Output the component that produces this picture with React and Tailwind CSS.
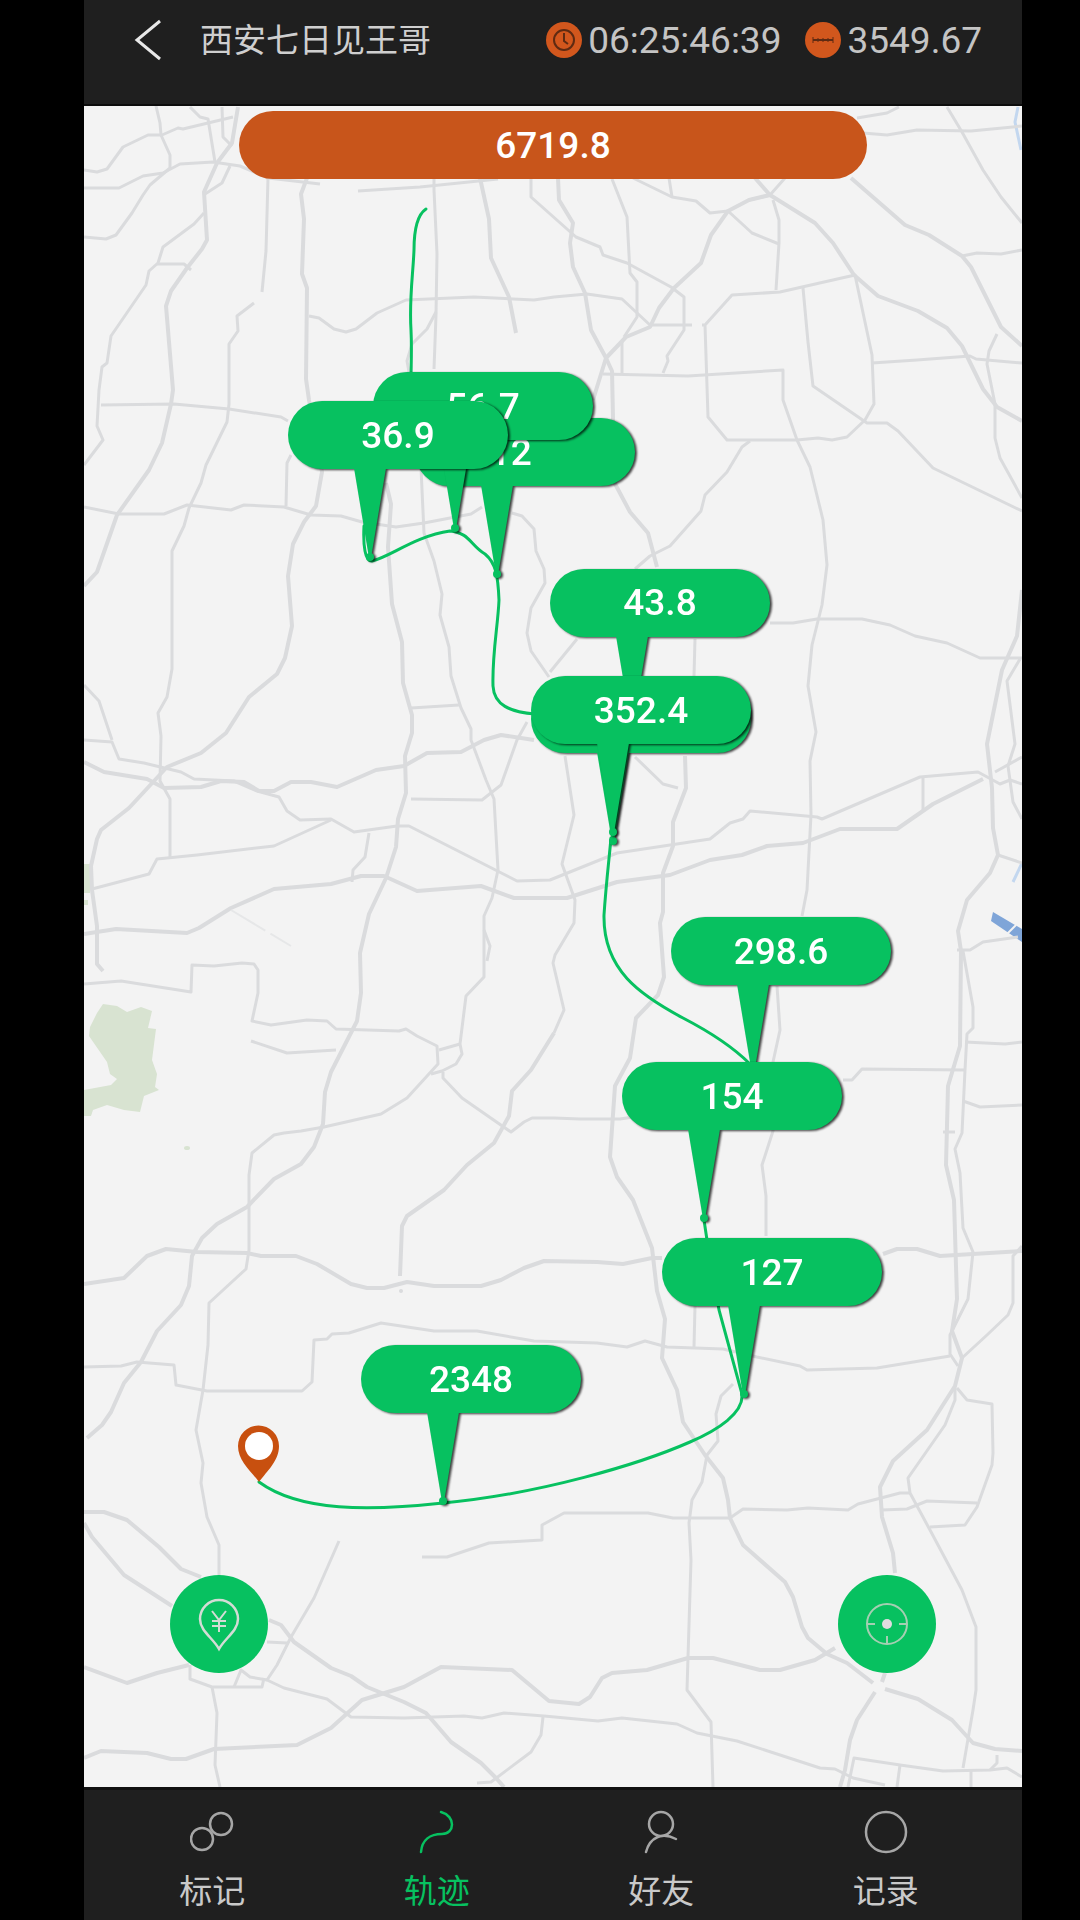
import { clsx } from 'clsx'

// ── Map data ──────────────────────────────────────────────────
const VIEW = { x: 84, y: 106, w: 938, h: 1681 }

const roads = [
  // top left
  '84,170 97,172 107,169 123,147 148,135 162,135 178,128 183,129 233,117',
  '156,106 160,123 161,135 170,155 170,168 150,185 143,195 132,213 116,235 106,239 84,237',
  '84,188 119,188 143,176 163,173 180,164 213,162 240,166 268,178 320,184',
  '190,107 200,117 208,119 215,162',
  '222,107 223,137 232,146',
  '230,166 222,183 205,194',
  '204,213 194,224 163,247 158,263 149,271 146,285 111,336 107,363 102,367 99,390 97,426 103,440 84,465',
  '157,264 184,264 191,270',
  '268,178 266,251 262,292',
  '254,303 237,316 238,331 229,344 229,404 227,422 206,465 201,483 189,508 184,526 172,551 172,669 167,697 158,713 161,736 160,781 170,799 170,857',
  '101,405 174,404 229,409 281,417 288,421',
  '291,455 287,463 286,506',
  '84,507 119,514 164,514 187,505 231,510 244,505 284,507 311,515 341,516 362,522 396,527 424,523 471,514 482,507',
  '309,316 319,318 334,329 346,332 356,329 377,313 406,300 474,297 534,300 554,297 587,294 622,299 650,325 692,325',
  '434,178 434,190 437,254 436,315 434,369',
  '436,312 427,329 412,344 407,361 409,372',
  '358,191 420,187 498,179',
  // top centre
  '531,178 531,197 576,237 600,247 603,255 627,263 671,287 684,297 684,330 667,356 668,361 663,373',
  '612,179 627,217 630,273 637,282 637,317 624,337',
  '633,178 672,197 696,201 710,213 728,211',
  '669,178 672,197',
  '785,178 770,195 749,200',
  '773,200 779,220 779,243 776,290',
  '728,211 752,233 779,244',
  '603,374 688,376 783,370 783,400 797,440 810,467 823,520 827,565 822,605 812,645 808,686 816,732 810,761 811,815 807,890 802,916',
  '622,342 622,374',
  '750,441 742,447 727,472 705,495 701,511 670,546 650,556 635,569',
  '577,639 550,672',
  '695,639 694,676',
  // top right
  '863,133 887,135 917,130 971,131 1022,126',
  '857,118 887,113 899,107',
  '947,107 962,132 983,170 1001,197 1022,223',
  '962,256 977,253 1001,254 1022,250',
  '705,325 732,295 780,292 855,275 872,355 874,404 865,420 847,437 832,440 818,438 797,440 727,440 708,417 705,325 702,325',
  '803,288 808,342 813,386 867,423 887,423 898,431 933,468 1022,511',
  '872,363 917,360 970,356 976,359 1022,363',
  '997,334 989,351 987,364 995,404 995,438 1000,458 1022,498',
  '770,623 793,623 817,619 862,619 890,625 915,636 947,643 980,658 1022,658',
  '1020,659 1007,681 1015,744 1008,766 1013,802 1022,819',
  '998,855 1022,863',
  '995,772 1022,757',
  '923,777 923,811',
  // middle
  '84,685 99,701 112,740',
  '84,740 112,742 119,759 144,763 181,772 194,779 234,781 257,791 279,797 287,811 300,820 331,819 354,832 397,826 409,826 517,881 550,880 617,853 710,839 730,823 743,819 750,811 817,817 822,819 920,777 978,772 1000,784 1010,780 1022,784',
  '92,889 149,874 157,859 197,855 274,846 331,820',
  '369,833 365,857 353,870 352,882',
  '421,468 424,533 434,561 442,594 440,615 449,647 451,676 461,708 471,729 471,740 486,780 494,799 498,870 492,898 484,916 484,977 466,996 460,1044 462,1054 456,1064 442,1071 431,1074',
  '484,930 490,946 487,961',
  '411,708 459,705',
  '411,799 482,800 501,785 517,740 527,722',
  '512,513 522,516 534,529 536,551 544,569 545,583 531,608 527,633 531,651 549,677',
  '565,756 574,815 562,864 575,900 574,923 555,955 553,963 564,1010 554,1033',
  '635,757 663,784 678,788',
  '84,984 121,981 191,992 192,965 214,966 242,963 254,964 258,970 258,993 252,1021 271,1025 307,1020 327,1021 336,1029 399,1031 406,1029 417,1036 437,1046 438,1064 407,1098 381,1114 324,1127 301,1131 284,1133 274,1135 252,1153 249,1175 249,1250 246,1269 209,1303 208,1345 203,1390 196,1430 203,1463 201,1483 207,1517 219,1545 219,1575',
  '439,1050 460,1044',
  '251,1041 287,1053 336,1050',
  '443,1072 443,1078 462,1098 511,1132 524,1122 532,1118 554,1118 580,1119 620,1119 640,1116',
  '843,1080 852,1080 862,1069 965,1070',
  '965,1042 1005,1044 1022,1042',
  '963,1101 980,1107 1022,1105',
  '957,950 970,950 983,942 1018,937',
  '943,1132 955,1132',
  '777,986 780,1030 773,1062 773,1131 762,1165 766,1196 766,1236',
  '963,951 973,1007 973,1028 967,1034 965,1070 962,1133 955,1149 960,1173 963,1228 973,1252 968,1299 950,1335 950,1354 958,1366',
  '962,1358 987,1335 1008,1315 1013,1303 1013,1256 1022,1246',
  '695,1306 694,1347',
  // lower
  '84,1367 121,1366 137,1362 174,1365 176,1385 207,1391 302,1391 312,1382 314,1340 327,1339 332,1334 349,1333 381,1323 434,1331 477,1331 534,1341 597,1343 627,1347 645,1341 667,1347 723,1349 757,1357 800,1366 807,1370 877,1368 950,1356',
  '733,1384 721,1396 716,1414 718,1441 707,1455 702,1482 692,1500 689,1523 691,1560 687,1690 711,1722 713,1787',
  '957,1388 967,1400 992,1404 993,1453 992,1465 977,1507 965,1525 930,1527',
  '955,1386 955,1400 945,1425 908,1478 910,1493 930,1530 962,1590 976,1627 976,1690 973,1710 963,1768',
  '422,1557 447,1557 489,1543 542,1540 542,1525 564,1513 648,1513 673,1518 730,1518 743,1509 787,1510 808,1508 848,1510 858,1504 900,1493 910,1493',
  '882,1510 907,1509 927,1501 977,1503',
  '339,1541 314,1598 291,1637 277,1665 267,1680 284,1688 327,1699 351,1717 404,1718 464,1716 482,1718 504,1713 544,1716 598,1721 622,1718 677,1724 697,1733 737,1741 820,1768 835,1769 853,1778 885,1785',
  '267,1642 287,1643',
  '190,1665 190,1679 212,1687 262,1687 264,1678',
  '212,1687 217,1713 215,1765 220,1787',
  '234,1687 241,1670 250,1677 267,1680',
  '543,1717 541,1735 531,1752 491,1782 477,1783',
  '848,1787 854,1758 900,1765 943,1771 990,1770 1007,1768 1022,1777',
  '900,1765 897,1787',
  '971,1770 971,1787',
  '997,1755 997,1763 990,1770',
]

const highways = [
  '238,107 232,143 217,163 204,192 207,240 202,249 187,268 171,291 166,306 173,390 171,404 162,443 149,470 117,515 97,572 84,586',
  '307,178 301,194 304,219 302,274 307,288 306,379 309,400 322,472 316,506 304,522 293,544 288,576 292,626 285,658 277,674 249,697 226,733 201,753 167,767 129,808 101,830 97,839 91,866 92,890 97,926 97,964 103,971',
  '480,178 489,219 491,258 509,297 516,333',
  '558,178 559,200 573,223 570,243 573,267 585,293 591,330 606,358 612,371 613,418 613,480 630,512 648,533 657,567',
  '755,178 770,195 815,223 833,243 854,275 878,296 918,311 947,328 962,346 983,389 997,407 1022,421',
  '770,195 749,200 728,211 711,235 701,263 674,288 659,308 650,327 626,337 606,358 593,400',
  '851,178 905,225 929,235 962,256 971,267 1001,327 1022,346',
  '1022,590 1017,636 1002,670 987,744 992,788 993,828 998,855 990,873 967,900 958,931 961,951 960,1046 948,1086 946,1165 954,1200 957,1299 952,1331 962,1358 955,1386 927,1430 893,1461 880,1487 882,1517 893,1553 895,1573',
  '84,762 104,772 147,779 164,788 201,787 221,781 244,782 259,791 274,791 291,782 311,782 337,787 376,770 404,766 427,753 461,752 484,740 501,735 534,740',
  '84,934 116,929 187,933 199,928 231,908 274,889 331,884 361,876 384,876 417,891 481,886 514,898 567,898 617,882 670,875 710,860 742,855 767,846 803,843 840,829 897,829 933,804 983,779',
  '386,483 391,504 388,547 392,604 402,642 403,683 412,715 412,733 405,756 406,793 398,819 396,847 386,878 369,914 360,953 361,993 357,1021 331,1072 325,1092 323,1124 314,1147 301,1164 274,1179 247,1207 217,1224 202,1238 192,1256 189,1286 181,1305 157,1331 141,1362 124,1383 111,1412 102,1425 87,1438',
  '554,1033 531,1070 512,1091 509,1116 494,1143 467,1165 444,1190 407,1216 402,1226 400,1276',
  '685,756 686,788 673,822 673,846 663,873 663,912 660,923 664,977 658,995 636,1018 630,1058 615,1086 610,1157 617,1177 633,1200 652,1248 657,1291 665,1319 662,1358 677,1390 683,1422 705,1455 723,1478 728,1500 730,1518 743,1545 785,1582 793,1597 802,1627 808,1638 827,1654 847,1663 873,1683',
  '885,1689 918,1699 952,1720 973,1743 995,1749 1022,1751',
  '84,1284 124,1278 147,1256 166,1249 197,1252 247,1253 261,1256 296,1256 317,1264 351,1284 367,1288 384,1288 407,1282 434,1286 481,1286 501,1280 524,1268 544,1261 597,1262 623,1264 652,1258 662,1258',
  '883,1254 897,1249 917,1249 940,1256 1022,1251',
  '84,1512 104,1512 127,1520 159,1547 181,1569 201,1577',
  '84,1523 92,1537 124,1575 172,1606',
  '269,1620 281,1625 294,1642 331,1668 351,1676 367,1687 404,1702 426,1713 451,1742 481,1763 496,1778 504,1787',
  '84,1667 127,1683 157,1673 189,1665',
  '84,1758 101,1751 147,1753 171,1759 186,1759 214,1749 297,1745 331,1728 362,1700 404,1687 441,1667 512,1670 549,1701 579,1704 590,1697 602,1678 612,1673 647,1670 688,1658 713,1658 760,1670 780,1670 815,1660 835,1648',
  '885,1673 882,1682',
  '875,1692 857,1720 850,1740 845,1770 840,1787',
]

// x / y are where the tip of the callout touches the route
const pins = [
  { id: 'a', x: 497, y: 576, label: '0.12', inset: 'pr-15' },
  { id: 'b', x: 455, y: 530, label: '56.7' },
  { id: 'c', x: 370, y: 559, label: '36.9' },
  { id: 'd', x: 632, y: 727, label: '43.8' },
  { id: 'e', x: 613, y: 843 },
  { id: 'f', x: 613, y: 834, label: '352.4' },
  { id: 'g', x: 753, y: 1075, label: '298.6' },
  { id: 'h', x: 704, y: 1220, label: '154' },
  { id: 'i', x: 744, y: 1396, label: '127' },
  { id: 'j', x: 443, y: 1503, label: '2348' },
]

const place = (x, y) => ({
  left: `${((x - VIEW.x) / VIEW.w) * 100}%`,
  top: `${((y - VIEW.y) / VIEW.h) * 100}%`,
})

// ── Map ───────────────────────────────────────────────────────
function MapCanvas() {
  return (
    <svg viewBox={`${VIEW.x} ${VIEW.y} ${VIEW.w} ${VIEW.h}`} className="block w-full h-auto bg-[#f3f3f3]" aria-hidden="true">
      <g fill="#d8e3d1">
        <path d="M103 1004L117 1006L127 1012L141 1007L152 1011L148 1028L156 1029L152 1060L157 1074L155 1087L159 1090L144 1096L140 1112L124 1110L107 1105L93 1110L91 1116L84 1116V1090L111 1085L117 1079L110 1074L107 1062L89 1036L90 1027L97 1013Z" />
        <path d="M84 864h6v29h-6zM84 900h4v5h-4z" />
        <ellipse cx="187" cy="1148" rx="3" ry="2" />
      </g>
      <path d="M993 912L991 921L1022 942V929Z" fill="#7fa5d8" />
      <path d="M1018 107L1015 122L1021 150M1022 863L1013 882" fill="none" stroke="#c3d7ef" strokeWidth="3" />
      <g fill="none" stroke="#dadbdd" strokeLinejoin="round">
        <g strokeWidth="3">{roads.map(r => <polyline key={r} points={r} />)}</g>
        <g strokeWidth="4">{highways.map(r => <polyline key={r} points={r} />)}</g>
        <path d="M231 910L291 946" stroke="#e6e7e8" strokeWidth="2" strokeDasharray="40 6" />
      </g>
      <circle cx="401" cy="1291" r="2" fill="#dadbdd" />
      <path d="M1007 934L1016 925" stroke="#f3f3f3" strokeWidth="2" />

      {/* travelled route */}
      <g fill="none" stroke="#07c160" strokeWidth="3" strokeLinecap="round">
        <path d="M426 209C417 215 414 232 414 250C413 275 409 300 411 330C412 350 411 365 411 380" />
        <path d="M364 526C363 545 365 562 372 561C390 557 415 536 450 531C470 533 470 545 485 554C496 563 498 576 499 600C498 625 492 655 493 686C494 705 510 712 535 714" />
        <path d="M611 838C609 860 606 885 604 915C603 970 640 995 683 1018C710 1032 732 1046 750 1064L753 1075" />
        <path d="M704 1220L707 1240L719 1310L742 1394C744 1413 718 1430 690 1442C640 1464 540 1494 443 1503C370 1511 300 1512 259 1482" />
      </g>

      <path fillRule="evenodd" fill="#c8500f" d="M259 1482C251 1471 238 1461 238 1446A20 20 0 0 1 279 1446C279 1461 267 1471 259 1482Z" />
      <circle cx="259" cy="1446" r="14" fill="#fff" />
    </svg>
  )
}

function Pin({ x, y, label, inset }) {
  return (
    <div
      className="absolute h-40 w-55 -ml-[82px] -mt-[158px] drop-shadow-[2px_1px_1px_rgba(0,0,0,0.75)]"
      style={place(x, y)}
    >
      <div className={clsx('flex h-17 items-center justify-center rounded-full bg-[#07c160] text-[37px] font-medium leading-none text-white', inset)}>
        {label}
      </div>
      <svg viewBox="0 0 32 92" className="ml-[66px] block h-23 w-8 -mt-px overflow-visible" fill="#07c160" aria-hidden="true">
        <path d="M0 0H32L17 90H15Z" />
        <circle cx="16" cy="89" r="4" />
      </svg>
    </div>
  )
}

function RoundButton({ label, className, children }) {
  return (
    <button
      type="button"
      aria-label={label}
      className={clsx('absolute bottom-[114px] flex size-[98px] items-center justify-center rounded-full bg-[#07c160]', className)}
    >
      <svg viewBox="0 0 56 56" className="size-14" fill="none" stroke="#d3dcd5" strokeWidth="2.5" aria-hidden="true">
        {children}
      </svg>
    </button>
  )
}

// ── Header ────────────────────────────────────────────────────
function Stat({ value, children }) {
  return (
    <div className="flex items-center gap-1.5">
      <svg viewBox="0 0 36 36" className="size-9" fill="none" stroke="#5e2a12" strokeWidth="2" aria-hidden="true">
        <circle cx="18" cy="18" r="18" fill="#d2571d" stroke="none" />
        {children}
      </svg>
      <span className="text-[37px] leading-none text-[#c4c4c4]">{value}</span>
    </div>
  )
}

function Header() {
  return (
    <header className="flex h-[106px] items-start justify-between border-b-2 border-[#0c0c0c] bg-[#1f1f1f] pt-4 pr-10 pl-12">
      <div className="flex h-12 items-center gap-9">
        <button type="button" aria-label="返回" className="flex size-8 items-center justify-center">
          <svg viewBox="0 0 32 44" className="h-11 w-8 shrink-0" fill="none" stroke="#e8e8e8" strokeWidth="3" aria-hidden="true">
            <path d="M28 3L5 22L28 41" />
          </svg>
        </button>
        <h1 className="text-[33px] leading-none text-[#cfcfcf]">西安七日见王哥</h1>
      </div>
      <div className="flex h-12 items-center gap-6">
        <Stat value="06:25:46:39">
          <circle cx="18" cy="18" r="10" />
          <path d="M18 11v8l4 3" />
        </Stat>
        <Stat value="3549.67">
          <path d="M8 18h20" />
          <path d="M8 15v6M28 15v6M13 16v4M18 16v4M23 16v4" strokeWidth="1" />
        </Stat>
      </div>
    </header>
  )
}

// ── Tab bar ───────────────────────────────────────────────────
const tabs = [
  { name: '标记', icon: <><circle cx="12" cy="29" r="11" /><circle cx="31" cy="14" r="11" /></> },
  { name: '轨迹', active: true, icon: <path d="M26 2C41 6 40 24 27 24C15 24 7 30 6 42" /> },
  { name: '好友', icon: <><circle cx="22" cy="14" r="12" /><path d="M7 42C11 27 23 22 37 29" /></> },
  { name: '记录', icon: <circle cx="22" cy="22" r="20" /> },
]

function TabBar() {
  return (
    <nav className="grid grow grid-cols-4 border-t-3 border-[#101010] bg-[#1f1f1f] pt-5 pr-6 pb-2.5 pl-4">
      {tabs.map(({ name, icon, active }) => (
        <button
          key={name}
          type="button"
          aria-current={active ? 'page' : undefined}
          className={clsx('flex flex-col items-center gap-5', active ? 'text-[#07c160]' : 'text-[#c9c9c9]')}
        >
          <svg
            viewBox="0 0 44 44"
            className={clsx('size-11', !active && 'text-[#a6a6a6]')}
            fill="none"
            stroke="currentColor"
            strokeWidth="2.5"
            strokeLinecap="round"
            aria-hidden="true"
          >
            {icon}
          </svg>
          <span className="text-[33px] leading-9">{name}</span>
        </button>
      ))}
    </nav>
  )
}

export default function App() {
  return (
    <div className="min-h-screen bg-black pr-[58px] pl-21 font-[Roboto,'Noto_Sans_CJK_SC',sans-serif]">
      <div className="flex min-h-screen flex-col">
        <Header />
        <main className="relative overflow-hidden">
          <MapCanvas />
          {pins.map(p => <Pin key={p.id} {...p} />)}
          <div className="absolute inset-x-0 top-[5px] flex justify-center">
            <div className="flex h-[68px] w-[67%] items-center justify-center rounded-full bg-[#c8551b] text-[37px] font-medium leading-none text-white">
              6719.8
            </div>
          </div>
          <RoundButton label="消费标记" className="left-[86px]">
            <path d="M28 53C22 42 9 35 9 23A19 19 0 0 1 47 23C47 35 34 42 28 53Z" />
            <path d="M21 15L28 24L35 15M28 24V36M21 25H35M21 30H35" strokeWidth="2" />
          </RoundButton>
          <RoundButton label="定位" className="right-[86px]">
            <circle cx="28" cy="28" r="20" strokeWidth="2" stroke="#a5cfb2" />
            <path d="M8 28h8M40 28h8M28 48v-8" strokeWidth="2" stroke="#a5cfb2" />
            <circle cx="28" cy="28" r="5" fill="#e0dce0" stroke="none" />
          </RoundButton>
        </main>
        <TabBar />
      </div>
    </div>
  )
}
